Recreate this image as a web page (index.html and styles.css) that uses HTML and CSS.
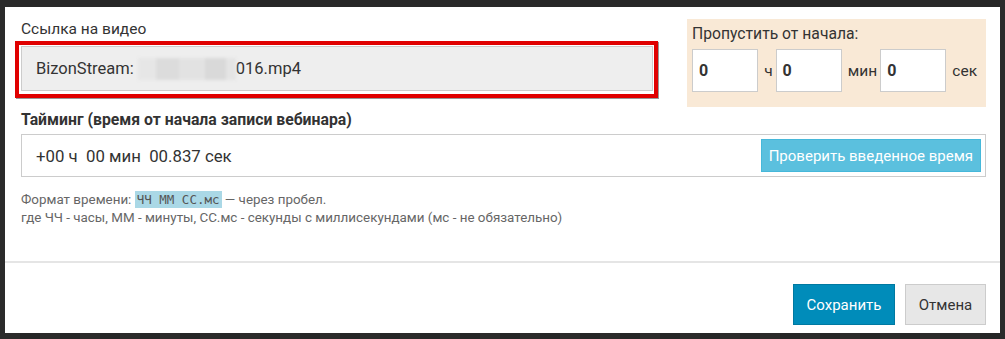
FILE: index.html
```html
<!DOCTYPE html>
<html lang="ru">
<head>
<meta charset="utf-8">
<link rel="stylesheet" href="styles.css">
</head>
<body>
<div class="modal">
  <div class="modal-body">
    <div class="top-row">
      <div class="link-col">
        <div class="label">Ссылка на видео</div>
        <div class="highlight">
          <div class="link-input">BizonStream: <span class="blur"></span>016.mp4</div>
        </div>
      </div>
      <div class="skip-panel">
        <div class="skip-label">Пропустить от начала:</div>
        <div class="skip-row">
          <div class="num-input">0</div><span class="unit">ч</span>
          <div class="num-input">0</div><span class="unit">мин</span>
          <div class="num-input">0</div><span class="unit">сек</span>
        </div>
      </div>
    </div>
    <div class="heading">Тайминг (время от начала записи вебинара)</div>
    <div class="timing-box">
      <span class="timing-text">+00 ч&nbsp; 00 мин&nbsp; 00.837 сек</span>
      <button class="btn-check">Проверить введенное время</button>
    </div>
    <div class="help">
      <div>Формат времени: <code class="fmt">ЧЧ ММ СС.мс</code> — через пробел.</div>
      <div>где ЧЧ - часы, ММ - минуты, СС.мс - секунды с миллисекундами (мс - не обязательно)</div>
    </div>
  </div>
  <div class="modal-footer">
    <button class="btn btn-primary">Сохранить</button>
    <button class="btn btn-default">Отмена</button>
  </div>
</div>
</body>
</html>
```

FILE: styles.css
```css
html, body {
  margin: 0;
  padding: 0;
}
body {
  background-color: #292929;
  background-image: repeating-linear-gradient(90deg, #2b2b2b 0 20px, #262626 20px 40px);
  font-family: Roboto, "Liberation Sans", sans-serif;
  color: #333;
  padding: 7px 5px 6px 5px;
  height: 339px;
  box-sizing: border-box;
}
.modal {
  background: #fff;
  height: 326px;
  display: flex;
  flex-direction: column;
}
.modal-body {
  padding: 12px 14px 0 16px;
  height: 256px;
  flex: none;
  box-sizing: border-box;
  border-bottom: 2px solid #e5e5e5;
}
.top-row {
  display: flex;
  justify-content: space-between;
  align-items: flex-start;
}
.link-col {
  width: 632px;
}
.label {
  font-size: 15.5px;
  line-height: 20px;
  color: #333;
}
.highlight {
  border: 4px solid #e00000;
  padding: 1px 1px 3px 2px;
  margin: 2px -5px 0 -6px;
  box-shadow: 1px 1px 0 #999;
}
.link-input {
  height: 45px;
  box-sizing: border-box;
  border: 1px solid #ccc;
  background: #eee;
  font-size: 16.5px;
  line-height: 43px;
  padding-left: 14px;
  color: #333;
  display: flex;
  align-items: center;
  white-space: pre;
}
.blur {
  display: inline-block;
  width: 98px;
  height: 22px;
  background: linear-gradient(90deg, #e6e6e6 0 18%, #dcdcdc 18% 42%, #e2e2e2 42% 68%, #d9d9d9 68% 90%, #e4e4e4 90%);
  filter: blur(1.5px);
}
.skip-panel {
  background: #f9e9d6;
  width: 299px;
  height: 88px;
  box-sizing: border-box;
  padding: 5px 6px 0 5px;
}
.skip-label {
  font-size: 15.7px;
  line-height: 20px;
  color: #333;
}
.skip-row {
  display: flex;
  align-items: center;
  margin-top: 5px;
}
.num-input {
  width: 68px;
  height: 43px;
  box-sizing: border-box;
  border: 1px solid #ccc;
  background: #fff;
  font-size: 16px;
  font-weight: bold;
  line-height: 41px;
  padding-left: 6px;
  color: #333;
}
.unit {
  font-size: 15.5px;
  color: #333;
  padding: 0 3px 0 6px;
}
.heading {
  font-size: 15.8px;
  font-weight: bold;
  line-height: 20px;
  margin-top: 3px;
  color: #333;
}
.timing-box {
  margin-top: 4px;
  height: 43px;
  box-sizing: border-box;
  border: 1px solid #ccc;
  display: flex;
  align-items: center;
  justify-content: space-between;
  padding: 0 4px 0 14px;
}
.timing-text {
  font-size: 16.8px;
  color: #333;
  white-space: pre;
}
.btn-check {
  height: 33px;
  padding: 0 7px;
  background: #5bc0de;
  border: 1px solid #46b8da;
  color: #fff;
  font-family: Roboto, "Liberation Sans", sans-serif;
  font-size: 15px;
  border-radius: 0;
}
.help {
  margin-top: 14px;
  font-size: 13.4px;
  line-height: 18px;
  color: #666;
}
.fmt {
  font-family: "DejaVu Sans Mono", "Liberation Mono", monospace;
  font-size: 12.5px;
  background: #aad8e6;
  color: #555;
  padding: 1px 2px;
}
.modal-footer {
  display: flex;
  justify-content: flex-end;
  gap: 10px;
  padding: 21px 14px 0 0;
}
.btn {
  height: 41px;
  font-family: Roboto, "Liberation Sans", sans-serif;
  font-size: 15px;
  border-radius: 0;
  box-sizing: border-box;
}
.btn-primary {
  width: 102px;
  background: #008cba;
  border: 1px solid #0079a1;
  color: #fff;
}
.btn-default {
  width: 81px;
  background: #e7e7e7;
  border: 1px solid #ccc;
  color: #333;
}
```
